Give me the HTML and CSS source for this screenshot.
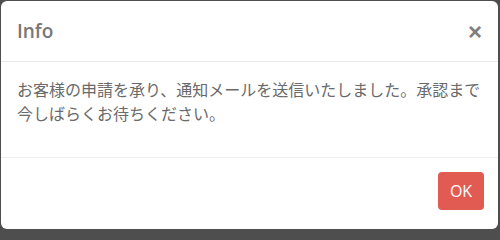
FILE: index.html
```html
<!DOCTYPE html>
<html lang="ja">
<head>
<meta charset="utf-8">
<title>Info</title>
<link rel="stylesheet" href="styles.css">
</head>
<body>
<div class="modal">
  <div class="modal-header">
    <h4 class="modal-title">Info</h4>
    <span class="close">×</span>
  </div>
  <div class="modal-body">
    <p>お客様の申請を承り、通知メールを送信いたしました。承認まで今しばらくお待ちください。</p>
  </div>
  <div class="modal-footer">
    <button class="btn-ok">OK</button>
  </div>
</div>
</body>
</html>
```
FILE: styles.css
```css
html, body {
  margin: 0;
  padding: 0;
}
body {
  width: 500px;
  height: 231px;
  background: #4e4e4e;
  overflow: hidden;
  font-family: "Noto Sans CJK JP", "Noto Sans", sans-serif;
}
.modal {
  margin: 1px 2px 0 1px;
  height: 228px;
  background: #fff;
  border-radius: 6px;
  box-sizing: border-box;
  display: flex;
  flex-direction: column;
}
.modal-header {
  display: flex;
  justify-content: space-between;
  align-items: center;
  padding: 16px 16px 15px;
  border-bottom: 1px solid #e8e8e8;
}
.modal-title {
  margin: 0;
  font-family: "Open Sans", "Noto Sans", sans-serif;
  font-size: 19px;
  font-weight: 600;
  line-height: 29px;
  color: #777;
}
.close {
  font-family: "Liberation Sans", sans-serif;
  font-size: 24px;
  font-weight: bold;
  line-height: 29px;
  color: #7f7f7f;
  margin-right: 0;
}
.modal-body {
  padding: 15px 16px;
}
.modal-body p {
  margin: 0 0 17px;
  font-size: 16px;
  line-height: 24px;
  color: #6a6a6a;
}
.modal-footer {
  border-top: 1px solid #eee;
  padding: 14px 14px;
  display: flex;
  justify-content: flex-end;
}
.btn-ok {
  width: 46px;
  height: 38px;
  border: none;
  border-radius: 4px;
  background: #e25b53;
  color: #fff;
  font-family: "Open Sans", "Noto Sans", sans-serif;
  font-size: 16px;
  padding: 0;
}
```
